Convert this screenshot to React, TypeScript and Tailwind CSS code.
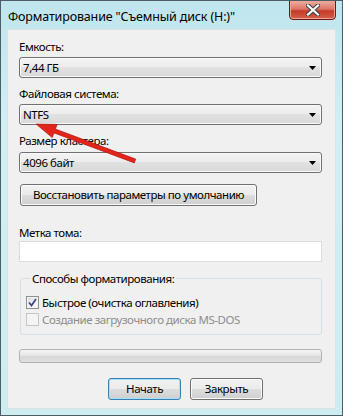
import React from "react";

const txt = "text-[11.5px] tracking-[-0.45px] whitespace-nowrap";

function Label({ text, className = "" }: { text: string; className?: string }) {
  return <div className={`h-[15px] leading-[15px] text-black ${txt} ${className}`}>{text}</div>;
}

function Combo({ value, className = "" }: { value: string; className?: string }) {
  return (
    <div
      className={`w-[303px] h-[21px] flex items-center justify-between rounded-[3px] border border-[#707070] bg-[linear-gradient(#f3f3f3,#ececec_50%,#e1e1e1_50%,#d9d9d9)] shadow-[inset_0_0_0_1px_#fafafa] pl-[3px] pr-[5px] text-black ${txt} ${className}`}
    >
      <span className="leading-[15px]">{value}</span>
      <svg width="7" height="4" viewBox="0 0 7 4">
        <path d="M0 0h7L3.5 4z" fill="#000" />
      </svg>
    </div>
  );
}

function Button({ label, primary = false, className = "" }: { label: string; primary?: boolean; className?: string }) {
  return (
    <div
      className={`h-[22px] flex items-center justify-center rounded-[3px] border text-black bg-[linear-gradient(#f2f2f2,#ebebeb_50%,#dddddd_50%,#cfcfcf)] ${txt} ${
        primary
          ? "border-[#3c7fb1] shadow-[inset_0_0_0_1px_#9fe2fb]"
          : "border-[#707070] shadow-[inset_0_0_0_1px_#fbfbfb]"
      } ${className}`}
    >
      {label}
    </div>
  );
}

function Checkbox({ label, checked = false, disabled = false }: { label: string; checked?: boolean; disabled?: boolean }) {
  return (
    <div className="h-[17px] flex items-center">
      <div
        className={`w-[13px] h-[13px] border flex items-center justify-center ${
          disabled
            ? "border-[#c6c6c6] bg-[#f4f4f4]"
            : "border-[#8e8f8f] bg-[linear-gradient(135deg,#dcdcdc,#ffffff)] shadow-[inset_0_0_0_1px_#f4f4f4]"
        }`}
      >
        {checked && (
          <svg width="9" height="9" viewBox="0 0 9 9">
            <path d="M1 4.5 L3.5 7.5 L8 1" fill="none" stroke="#3b4d84" strokeWidth="1.8" />
          </svg>
        )}
      </div>
      <span className={`ml-[3px] leading-[15px] ${txt} ${disabled ? "text-[#8d8d8d]" : "text-black"}`}>{label}</span>
    </div>
  );
}

export default function App() {
  return (
    <div className="relative w-[343px] h-[416px] border border-[#4d5d66] bg-[linear-gradient(#bfe5ee,#d1eff5_30%,#cdedf3)] flex flex-col font-['Segoe_UI','Noto_Sans',sans-serif] overflow-hidden">
      {/* title bar */}
      <div className="h-[28px] flex items-start justify-between shrink-0">
        <div className="pl-[7px] pt-[8px] text-[12.5px] tracking-[-0.15px] leading-[16px] text-black whitespace-nowrap">
          Форматирование "Съемный диск (H:)"
        </div>
        <div className="mr-[6px] -mt-px w-[47px] h-[20px] rounded-b-[4px] border border-[#6b1a12] bg-[linear-gradient(#eab0a4,#dd7566_45%,#c63a27_55%,#d2614e)] shadow-[inset_0_0_0_1px_#f0a496] flex items-center justify-center">
          <svg width="14" height="12" viewBox="0 0 14 12">
            <path d="M2 1.5 L12 10.5 M12 1.5 L2 10.5" stroke="#3b3f47" strokeWidth="4.2" strokeLinecap="square" />
            <path d="M2 1.5 L12 10.5 M12 1.5 L2 10.5" stroke="#ffffff" strokeWidth="2.2" strokeLinecap="square" />
          </svg>
        </div>
      </div>

      {/* dialog body */}
      <div className="flex-1 ml-[6px] mr-[6px] mb-[6px] border border-[#dbe3e7] bg-[#f0f0f0] px-[11px] flex flex-col">
        <Label text="Емкость:" className="mt-[9px]" />
        <Combo value="7,44 ГБ" className="mt-[3px]" />
        <Label text="Файловая система:" className="mt-[8px]" />
        <Combo value="NTFS" className="mt-[3px]" />
        <Label text="Размер кластера:" className="mt-[8px]" />
        <Combo value="4096 байт" className="mt-[4px]" />
        <Button label="Восстановить параметры по умолчанию" className="mt-[11px] ml-px w-[237px]" />
        <Label text="Метка тома:" className="mt-[19px]" />
        <div className="mt-[1px] w-[303px] h-[21px] border border-[#dcdcdc] bg-white" />

        <fieldset className="mt-[9px] ml-px w-[302px] rounded-[3px] border border-[#d5dfe5] px-[5px] pb-[6px]">
          <legend className={`ml-[4px] px-[2px] leading-[15px] text-black ${txt}`}>Способы форматирования:</legend>
          <div className="pt-[8px]">
            <Checkbox label="Быстрое (очистка оглавления)" checked />
            <Checkbox label="Создание загрузочного диска MS-DOS" disabled />
          </div>
        </fieldset>

        <div className="mt-[14px] w-[303px] h-[14px] rounded-[3px] border border-[#b2b2b2] bg-[linear-gradient(#f6f6f6,#e4e4e4_50%,#d7d7d7_50%,#e0e0e0)]" />

        <div className="mt-[15px] ml-[89px] flex gap-[9px]">
          <Button label="Начать" primary className="w-[73px]" />
          <Button label="Закрыть" className="w-[73px]" />
        </div>
      </div>

      {/* red annotation arrow */}
      <svg className="absolute left-0 top-0 pointer-events-none" width="343" height="416" viewBox="0 0 343 416">
        <polygon
          points="35,123 56.2,123.4 54.4,128.1 134.7,158.1 133.3,161.9 53,131.9 51.2,136.6"
          fill="#e3241b"
          stroke="#b01a12"
          strokeWidth="0.7"
          strokeLinejoin="round"
        />
      </svg>
    </div>
  );
}
